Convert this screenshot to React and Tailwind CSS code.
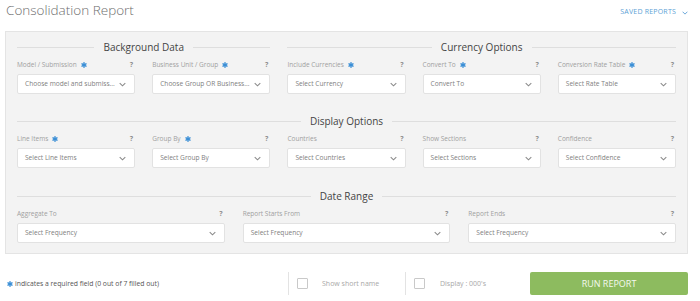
import React from "react";

const Star = ({ className }) => (
  <svg viewBox="0 0 10 10" className={className}>
    <g stroke="#3b8fd6" strokeWidth="2.4" strokeLinecap="round">
      <line x1="5" y1="1.2" x2="5" y2="8.8" />
      <line x1="1.7" y1="3.1" x2="8.3" y2="6.9" />
      <line x1="1.7" y1="6.9" x2="8.3" y2="3.1" />
    </g>
  </svg>
);

const Chevron = ({ className, color = "#8a8a8a" }) => (
  <svg viewBox="0 0 8 5" className={className}>
    <polyline points="0.8,0.8 4,4 7.2,0.8" fill="none" stroke={color} strokeWidth="1.2" />
  </svg>
);

function Field({ label, req, placeholder }) {
  return (
    <div className="flex flex-col min-w-0">
      <div className="flex items-center h-[10px] text-[6.5px] leading-[10px] text-[#a0a0a0]">
        <span className="whitespace-nowrap">{label}</span>
        {req && <Star className="ml-[4px] w-[6px] h-[6px] shrink-0" />}
        <span className="ml-auto mr-[2px] font-bold text-[#8e8e8e] text-[7px]">?</span>
      </div>
      <div className="mt-[4px] h-[20px] bg-white border border-[#e2e2e2] rounded-[2px] flex items-center pl-[7px] pr-[8px]">
        <span className="text-[6.6px] leading-[10px] text-[#808080] whitespace-nowrap">{placeholder}</span>
        <Chevron className="ml-auto shrink-0 w-[7px] h-[5px]" />
      </div>
    </div>
  );
}

function Heading({ children, className }) {
  return (
    <div className={"flex items-center gap-[9px] h-[14px] " + className}>
      <div className="flex-1 h-px bg-[#dedede]" />
      <span className="text-[10px] leading-[14px] text-[#444] whitespace-nowrap">{children}</span>
      <div className="flex-1 h-px bg-[#dedede]" />
    </div>
  );
}

export default function App() {
  return (
    <div className="w-[700px] h-[301px] bg-white font-['Open_Sans',sans-serif] overflow-hidden">
      <div className="h-[31px] flex justify-between pl-[6px] pr-[12px]">
        <div className="text-[13.5px] leading-[20px] font-light text-[#6e6e6e]">Consolidation Report</div>
        <div className="flex items-center h-[25px] gap-[6px] text-[7px] text-[#5c9fd6] tracking-[0.2px]">
          <span>SAVED REPORTS</span>
          <Chevron className="w-[6px] h-[4px]" color="#5c9fd6" />
        </div>
      </div>

      <div className="ml-[5px] mr-[12px] bg-[#f3f3f3] border border-[#e4e4e4] px-[11px] pt-[8px] pb-[10px]">
        <div className="grid grid-cols-5 gap-x-[17px]">
          <Heading className="col-span-2">Background Data</Heading>
          <Heading className="col-span-3">Currency Options</Heading>
        </div>
        <div className="grid grid-cols-5 gap-x-[17px] mt-[6px]">
          <Field label="Model / Submission" req placeholder="Choose model and submiss..." />
          <Field label="Business Unit / Group" req placeholder="Choose Group OR Business..." />
          <Field label="Include Currencies" req placeholder="Select Currency" />
          <Field label="Convert To" req placeholder="Convert To" />
          <Field label="Conversion Rate Table" req placeholder="Select Rate Table" />
        </div>

        <Heading className="mt-[20px]">Display Options</Heading>
        <div className="grid grid-cols-5 gap-x-[17px] mt-[6px]">
          <Field label="Line Items" req placeholder="Select Line Items" />
          <Field label="Group By" req placeholder="Select Group By" />
          <Field label="Countries" placeholder="Select Countries" />
          <Field label="Show Sections" placeholder="Select Sections" />
          <Field label="Confidence" placeholder="Select Confidence" />
        </div>

        <Heading className="mt-[21px]">Date Range</Heading>
        <div className="grid grid-cols-3 gap-x-[18px] mt-[6px]">
          <Field label="Aggregate To" placeholder="Select Frequency" />
          <Field label="Report Starts From" placeholder="Select Frequency" />
          <Field label="Report Ends" placeholder="Select Frequency" />
        </div>
      </div>

      <div className="ml-[5px] mr-[12px] mt-[18px] h-[23px] flex">
        <div className="w-[283px] flex items-center pl-[2px]">
          <Star className="w-[6px] h-[6px]" />
          <span className="ml-[2px] text-[6.8px] leading-[10px] text-[#555]">indicates a required field (0 out of 7 filled out)</span>
        </div>
        <div className="w-[117px] border-l border-[#e3e3e3] flex items-center pl-[8px]">
          <div className="w-[11px] h-[11px] border border-[#c9c9c9] rounded-[1px] bg-white" />
          <span className="ml-[14px] text-[7px] leading-[10px] text-[#a8a8a8]">Show short name</span>
        </div>
        <div className="border-l border-[#e3e3e3] flex items-center pl-[8px]">
          <div className="w-[11px] h-[11px] border border-[#c9c9c9] rounded-[1px] bg-white" />
          <span className="ml-[15px] text-[7px] leading-[10px] text-[#a8a8a8]">Display : 000's</span>
        </div>
        <div className="ml-auto w-[158px] bg-[#8dbb5f] rounded-[2px] flex items-center justify-center text-[9px] text-[#f4f9ee]">
          RUN REPORT
        </div>
      </div>
    </div>
  );
}
